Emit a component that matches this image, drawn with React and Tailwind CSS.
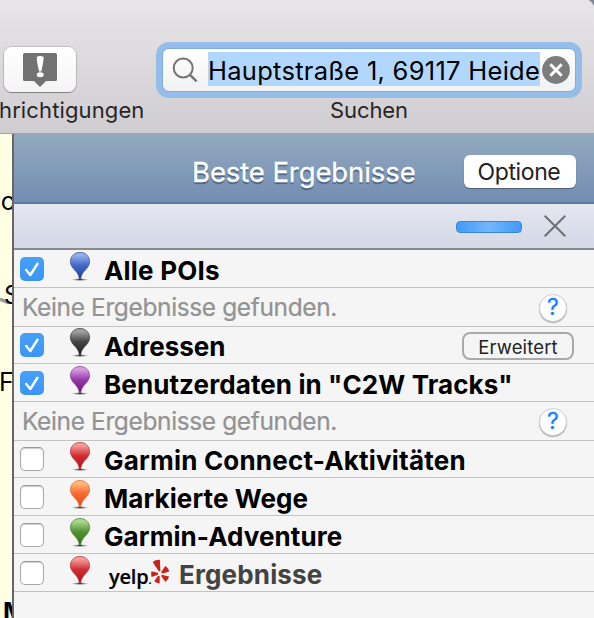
import React, { useState } from 'react';

const GROUPS = [
  { id: 'poi', label: 'Alle POIs', pin: 'blue', checked: true, row: 'h-[38px] pt-[7px]', text: 'tracking-[0.2px]', empty: true },
  { id: 'addr', label: 'Adressen', pin: 'black', checked: true, row: 'h-[37px] pt-[6px]', text: 'tracking-[0px]', advanced: true },
  { id: 'user', label: 'Benutzerdaten in "C2W Tracks"', pin: 'purple', checked: true, row: 'h-[38px] pt-[7px]', text: 'tracking-[0.1px]', empty: true },
  { id: 'connect', label: 'Garmin Connect-Aktivitäten', pin: 'red', row: 'h-[37px] pt-[6px]', text: 'tracking-[0.2px]' },
  { id: 'ways', label: 'Markierte Wege', pin: 'orange', row: 'h-[38px] pt-[7px]', text: 'tracking-[0.08px]' },
  { id: 'adventure', label: 'Garmin-Adventure', pin: 'green', row: 'h-[38px] pt-[7px]', text: 'tracking-[0.08px]' },
  { id: 'yelp', label: 'Ergebnisse', pin: 'red', row: 'h-[38px] pt-[7px]', text: 'tracking-[0.15px]', yelp: true },
];

const PIN_COLORS = {
  blue: ['#8fb0ee', '#3f68c4', '#1f3f9c', '#3a3f8c'],
  black: ['#a0a0a0', '#454545', '#222222', '#333333'],
  purple: ['#d79be0', '#963aa8', '#6a1580', '#7d3a8c'],
  red: ['#f59a98', '#d02c33', '#ae141c', '#b02a30'],
  orange: ['#ffb878', '#f8682f', '#ea4a1c', '#e06a30'],
  green: ['#a5d88c', '#549232', '#35750f', '#3f7d28'],
};

const Pin = ({ id, color }) => {
  const [light, mid, dark, edge] = PIN_COLORS[color];
  return (
    <svg width="24" height="30" viewBox="0 0 24 30" className="-mt-[5px] ml-6 shrink-0">
      <defs>
        <linearGradient id={`pin-${id}`} x1="0" y1="0" x2="0" y2="1">
          <stop offset="0" stopColor={light} />
          <stop offset="0.12" stopColor={light} />
          <stop offset="0.5" stopColor={mid} />
          <stop offset="1" stopColor={dark} />
        </linearGradient>
        <radialGradient id={`shade-${id}`}>
          <stop offset="0" stopColor="#000" stopOpacity="0.9" />
          <stop offset="0.45" stopColor="#333" stopOpacity="0.5" />
          <stop offset="1" stopColor="#777" stopOpacity="0" />
        </radialGradient>
      </defs>
      <ellipse cx="12" cy="27.6" rx="9" ry="1.5" fill={`url(#shade-${id})`} />
      <path
        d="M12 .4C6.500 .4 2.400 4.500 2.400 9.600c0 3.600 2.200 6.200 4.800 9 2.200 2.400 3.800 4.800 4.200 8.400h1.200c.4-3.600 2-6 4.200-8.400 2.600-2.800 4.800-5.400 4.800-9C21.600 4.500 17.500 .4 12 .4z"
        fill={`url(#pin-${id})`}
        stroke={edge}
        strokeWidth="0.7"
      />
    </svg>
  );
};

const Checkbox = ({ checked, onChange }) => (
  <button
    onClick={onChange}
    className={`ml-1.5 flex size-6 shrink-0 items-center justify-center rounded-[5px] ${
      checked
        ? 'bg-linear-to-b from-[#47a0f9] to-[#3a95f8]'
        : 'border border-[#a9a9a9] border-t-[#999] bg-white shadow-[inset_0_1px_1px_rgba(0,0,0,0.2)]'
    }`}
  >
    {checked && (
      <svg width="24" height="24" viewBox="0 0 24 24" fill="none">
        <path d="M6.200 13l4.100 5L17.400 6.800" stroke="#fff" strokeWidth="2.500" strokeLinecap="round" strokeLinejoin="round" />
      </svg>
    )}
  </button>
);

const YelpLogo = () => (
  <span className="ml-[17px] flex shrink-0 items-start">
    <span className="mt-[6px] w-[42px] whitespace-nowrap font-['Open_Sans',sans-serif] text-[20px] font-semibold leading-5 tracking-[-0.2px] text-black [-webkit-text-stroke:0.2px_black]">
      yelp<span className="text-[11px]">.</span>
    </span>
    <svg width="19" height="26" viewBox="0 0 19 26" className="-mt-[2px]" fill="#c9221a">
      <path d="M1.800 3.200C3.600 1.400 6.500 .6 8.900 .9l.5 10.400c0 1.200-1.200 1.500-1.900.5z" />
      <path d="M.5 12.200l6 1.600c1 .5 1 1.700-.1 2.100L.6 18C0 16.200 0 13.800.5 12.200z" />
      <path d="M6.700 17.200c.9-.9 2-.5 2 .6v6.600c-1.900 0-4.300-.8-5.400-2.400z" />
      <path d="M10.500 17.600c-.6-1.200.4-2 1.300-1.700l6.200 1.700c-.4 2.100-1.900 4.200-3.700 5.200z" />
      <path d="M11.800 14.500c-1.200.2-1.900-1-1.200-1.900l3.700-5.500c1.800 1.100 3.500 3.200 3.900 5.300z" />
    </svg>
  </span>
);

const HelpButton = () => (
  <button className="mr-[27px] flex size-7 items-center justify-center rounded-full border border-[#d2d2d2] bg-white font-['Inter',sans-serif] text-[23px] leading-none text-[#1581fb] shadow-[0_1px_1px_rgba(0,0,0,0.3)] [-webkit-text-stroke:0.3px_#1581fb]">
    ?
  </button>
);

const ResultGroup = ({ group, checked, onToggle }) => (
  <>
    <div className={`flex items-start border-b border-[#c3c3c3] ${group.row}`}>
      <Checkbox checked={checked} onChange={onToggle} />
      <Pin id={group.id} color={group.pin} />
      {group.yelp && <YelpLogo />}
      <span
        className={`mt-[2px] whitespace-nowrap text-[26px] font-bold leading-6 ${group.text} ${
          group.yelp ? 'ml-[9px] text-[#434343]' : 'ml-[12px] text-black'
        }`}
      >
        {group.label}
      </span>
      {group.advanced && (
        <button className="-mt-px mr-5 ml-auto h-7 w-28 rounded-[8px] border-2 border-[#a9a9a9] bg-[#f5f5f5] pt-px text-[18.500px] leading-6 tracking-[0.15px] text-[#222]">
          Erweitert
        </button>
      )}
    </div>
    {group.empty && (
      <div className="flex h-[39px] items-center justify-between border-b border-[#c3c3c3] pt-px pl-2">
        <span className="whitespace-nowrap text-[24.500px] tracking-[-0.38px] text-[#929292] [-webkit-text-stroke:0.2px_#929292]">
          Keine Ergebnisse gefunden.
        </span>
        <HelpButton />
      </div>
    )}
  </>
);

const Toolbar = () => (
  <div className="relative flex h-[134px] shrink-0 items-start overflow-hidden border-b border-[#a5a1a3] bg-linear-to-b from-[#e7e5e7] to-[#d0cdd0]">
    <div className="w-[156px] shrink-0 pt-[47px]">
      <button className="ml-1 flex h-[45px] w-[72px] items-start justify-center rounded-[8px] bg-linear-to-b from-white to-[#f4f4f4] pt-[6px] shadow-[0_0_0_1px_rgba(0,0,0,0.13),0_1px_1px_rgba(0,0,0,0.3)]">
        <svg width="34" height="34" viewBox="0 0 34 34">
          <path d="M1.500 0h31A1.500 1.500 0 0 1 34 1.500v25a1.500 1.500 0 0 1-1.500 1.500H23l-6 6-6-6H1.500A1.500 1.500 0 0 1 0 26.500v-25A1.500 1.500 0 0 1 1.500 0z" fill="#727272" />
          <path d="M13.800 4.500c0-2 6.800-2 6.800 0 0 4.500-1.300 9.500-2.300 14h-2.200c-1-4.500-2.300-9.500-2.300-14z" fill="#fff" />
          <ellipse cx="17.200" cy="21.700" rx="3.500" ry="2.500" fill="#fff" />
        </svg>
      </button>
      <p className="mt-[6px] -ml-px whitespace-nowrap text-[22px] leading-6 tracking-[0.12px] text-[#262626]">hrichtigungen</p>
    </div>
    <div className="w-[426px] shrink-0 pt-[42px]">
      <div className="h-14 rounded-[13px] bg-[#94bdea] p-[6px]">
        <div className="flex h-11 items-center rounded-[7px] border border-[#7fade2] bg-linear-to-b from-white to-[#f1f1f1]">
          <svg width="26" height="26" viewBox="0 0 26 26" fill="none" stroke="#747474" strokeWidth="2" className="ml-[9px] shrink-0">
            <circle cx="11.200" cy="11" r="9.500" />
            <path d="M18 17.800l6.600 6.600" strokeWidth="2.400" />
          </svg>
          <span className="-mt-[2px] ml-[10px] h-[34px] w-[332px] shrink-0 overflow-hidden whitespace-nowrap bg-[#b2d7fe] text-[25.500px] leading-[38px] tracking-[0.28px] text-black">
            Hauptstraße 1, 69117 Heide
          </span>
          <svg width="28" height="28" viewBox="0 0 28 28" className="-mt-px ml-[2px] shrink-0">
            <circle cx="14" cy="14" r="13.900" fill="#7c7c7c" />
            <path d="M8.300 8.300l11.400 11.400M19.700 8.300L8.300 19.700" stroke="#fff" strokeWidth="3" />
          </svg>
        </div>
      </div>
      <p className="text-center text-[22px] leading-6 tracking-[-0.1px] text-[#262626]">Suchen</p>
    </div>
    {/* Desktop showing past the rounded window corner */}
    <svg width="9" height="9" viewBox="0 0 9 9" className="absolute top-0 right-0">
      <path d="M3.500 0H9v6C7.800 3.500 6 1.200 3.500 0z" fill="#7d8a96" />
    </svg>
  </div>
);

/* Slice of the map left of the panel */
const MapEdge = () => (
  <div className="relative w-3 shrink-0 overflow-hidden bg-[#ffffe3] text-[25px] leading-6 text-black">
    <span className="absolute top-[55px] -left-[15px]">Po</span>
    <svg width="12" height="8" viewBox="0 0 12 8" className="absolute top-[163px] left-0">
      <path d="M0 2l9 4" stroke="#999" strokeWidth="3.500" />
    </svg>
    <span className="absolute top-[149px] left-[4px]">S</span>
    <span className="absolute top-[236px] -left-[1px]">F</span>
    <span className="absolute top-[466px] left-[3px] font-bold">M</span>
  </div>
);

export default function App() {
  const [checked, setChecked] = useState(() => Object.fromEntries(GROUPS.map((g) => [g.id, !!g.checked])));

  const toggle = (id) => setChecked((prev) => ({ ...prev, [id]: !prev[id] }));

  return (
    <div className="flex h-[618px] w-[594px] flex-col overflow-hidden font-['Inter',sans-serif]">
      <Toolbar />
      <div className="flex min-h-0 flex-1">
        <MapEdge />
        <div className="min-w-0 flex-1 border-l-2 border-[#666] bg-[#f5f5f5]">
          <div className="flex h-[70px] items-center border-b-2 border-[#5f7ba5] bg-linear-to-b from-[#93aabf] to-[#738db2] pt-[8px] pr-[18px]">
            <h1 className="ml-[178px] whitespace-nowrap text-[27.500px] leading-8 tracking-[-0.1px] text-white [text-shadow:0_2px_1px_rgba(40,60,90,0.6)] [-webkit-text-stroke:0.3px_white]">
              Beste Ergebnisse
            </h1>
            <button className="-mt-[2px] ml-auto h-[33px] w-28 shrink-0 rounded-[6px] bg-white pt-px pr-[2px] text-[23px] leading-8 tracking-[-0.4px] text-[#222] shadow-[0_1px_1px_rgba(0,0,0,0.35)]">
              Optione
            </button>
          </div>
          <div className="flex h-[46px] items-center justify-end border-b-2 border-[#888b8c] bg-linear-to-b from-[#e4e7f0] to-[#d3d8e5] pr-7">
            <div className="mt-[2px] h-3 w-[66px] rounded-[4px] border border-[#3b84d6] bg-linear-to-r from-[#3f9afa] via-[#73b6fd] to-[#3f9afa]" />
            <svg width="22" height="22" viewBox="0 0 22 22" stroke="#6e7073" strokeWidth="2" className="ml-[22px]">
              <path d="M.7 .7l20.600 20.600M21.300 .7L.7 21.300" />
            </svg>
          </div>
          {GROUPS.map((group) => (
            <ResultGroup key={group.id} group={group} checked={checked[group.id]} onToggle={() => toggle(group.id)} />
          ))}
        </div>
      </div>
    </div>
  );
}
